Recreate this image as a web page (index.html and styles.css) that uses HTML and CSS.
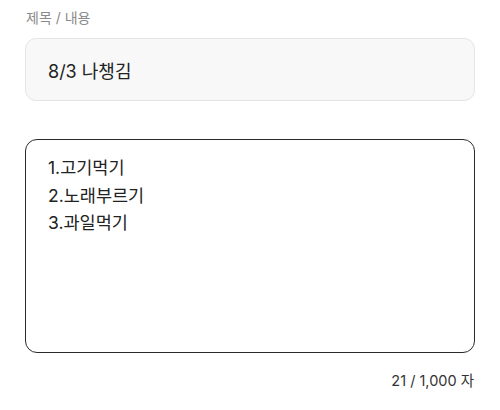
FILE: index.html
```html
<!DOCTYPE html>
<html>
<head>
  <meta charset="UTF-8">
  <title>제목 / 내용</title>
  <meta name="viewport" content="width=device-width, initial-scale=1.0">
  <link rel="stylesheet" href="styles.css">
</head>
<body>
  <div class="form">
    <label class="label" for="title">제목 / 내용</label>
    <input class="title" id="title" type="text" value="8/3 나챙김">

    <textarea class="content" id="content">1.고기먹기
2.노래부르기
3.과일먹기</textarea>
    <div class="count"><span id="count">21</span> / 1,000 자</div>
  </div>
</body>
</html>
```

FILE: styles.css
```css
body {
  margin: 0;
  padding: 0 25px;
  background: #fff;
  font-family: Inter, "Noto Sans CJK KR", sans-serif;
  color: #222;
}

.form {
  display: flex;
  flex-direction: column;
}

.label {
  margin-top: 8px;
  font-size: 14px;
  line-height: 20px;
  color: #8a8a8a;
  padding-left: 1px;
}

.title {
  box-sizing: border-box;
  margin: 10px 0 0;
  height: 63px;
  padding: 0 22px;
  border: 1px solid #e4e4e4;
  border-radius: 11px;
  background: #f8f8f8;
  font-family: inherit;
  font-size: 18px;
  color: #222;
  outline: none;
}

.content {
  box-sizing: border-box;
  margin: 38px 0 0;
  height: 214px;
  padding: 14px 22px;
  border: 1.5px solid #2a2a2a;
  border-radius: 12px;
  font-family: inherit;
  font-size: 17.5px;
  line-height: 27.5px;
  color: #222;
  resize: none;
  outline: none;
}

.count {
  margin-top: 18px;
  text-align: right;
  font-size: 14.5px;
  line-height: 20px;
  color: #333;
  padding-right: 1px;
}
```
